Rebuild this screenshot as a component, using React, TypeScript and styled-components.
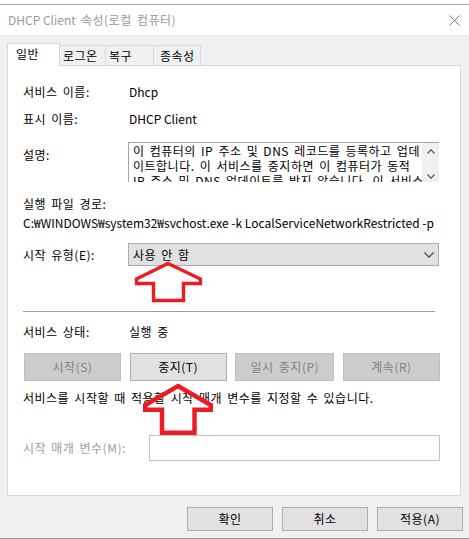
import React from "react";
import styled, { createGlobalStyle } from "styled-components";

const GlobalStyle = createGlobalStyle`
  html, body { margin: 0; padding: 0; background: #ffffff; }
  body {
    font-family: "Noto Sans CJK KR", "Noto Sans", sans-serif;
    font-size: 12px;
    color: #000;
    letter-spacing: 0.5px;
    word-spacing: 2px;
  }
  * { box-sizing: border-box; }
`;

const Window = styled.div`
  position: relative;
  width: 469px;
  height: 539px;
  background: #f0f0f0;
  display: flex;
  flex-direction: column;
  overflow: hidden;
`;

const TopStrip = styled.div`
  height: 5px;
  background: #ffffff;
  border-bottom: 1px solid #a9a9a9;
`;

const TitleBar = styled.div`
  height: 30px;
  background: #ffffff;
  display: flex;
  align-items: center;
  justify-content: space-between;
  padding: 0 9px 0 8px;
`;

const TitleText = styled.span`
  color: #999999;
  font-size: 12px;
  line-height: 16px;
`;

const Latin = styled.span`
  letter-spacing: 0;
  word-spacing: 0;
`;

const Body = styled.div`
  flex: 1;
  display: flex;
  flex-direction: column;
  padding: 8px 6px 0 7px;
`;

const TabStrip = styled.div`
  display: flex;
  align-items: flex-end;
  height: 22px;
  position: relative;
  z-index: 1;
`;

const Tab = styled.div<{ $active?: boolean; $w: number; $pad: number }>`
  width: ${(p) => p.$w}px;
  height: ${(p) => (p.$active ? 23 : 20)}px;
  margin-bottom: ${(p) => (p.$active ? -1 : 0)}px;
  margin-left: ${(p) => (p.$active ? 0 : -1)}px;
  background: ${(p) => (p.$active ? "#ffffff" : "#f0f0f0")};
  border: 1px solid #d9d9d9;
  border-bottom: none;
  padding-left: ${(p) => p.$pad}px;
  display: flex;
  align-items: ${(p) => (p.$active ? "flex-start" : "center")};
  padding-top: ${(p) => (p.$active ? 2 : 0)}px;
  font-size: 12px;
  line-height: 16px;
  white-space: nowrap;
  &:first-child { margin-left: 0; }
`;

const Panel = styled.div`
  width: 454px;
  height: 431px;
  background: #ffffff;
  border: 1px solid #d9d9d9;
  display: flex;
  flex-direction: column;
  padding-left: 15px;
`;

const Row = styled.div<{ $mt: number; $h: number; $top?: boolean }>`
  display: flex;
  align-items: ${(p) => (p.$top ? "flex-start" : "center")};
  margin-top: ${(p) => p.$mt}px;
  height: ${(p) => p.$h}px;
  flex-shrink: 0;
`;

const Label = styled.span<{ $w?: number; $mt?: number; $disabled?: boolean }>`
  width: ${(p) => p.$w ?? 105}px;
  flex-shrink: 0;
  margin-top: ${(p) => p.$mt ?? 0}px;
  line-height: 18px;
  color: ${(p) => (p.$disabled ? "#9d9d9d" : "#000")};
  white-space: nowrap;
`;

const Value = styled.span`
  padding-left: 1px;
  line-height: 18px;
  white-space: nowrap;
`;

const DescBox = styled.div`
  width: 311px;
  height: 40px;
  border-top: 1px solid #a5a5a5;
  border-left: 1px solid #a5a5a5;
  display: flex;
  overflow: hidden;
`;

const DescText = styled.div`
  flex: 1;
  padding-left: 4px;
  overflow: hidden;
`;

const DescLine = styled.div`
  height: 15px;
  line-height: 15px;
  white-space: nowrap;
`;

const ScrollBar = styled.div`
  width: 17px;
  flex-shrink: 0;
  background: #f0f0f0;
  display: flex;
  flex-direction: column;
  align-items: center;
  justify-content: space-between;
  padding: 6px 0 3px;
`;

const Select = styled.div`
  width: 311px;
  height: 23px;
  background: #e1e1e1;
  border: 1px solid #adadad;
  display: flex;
  align-items: center;
  justify-content: space-between;
  padding: 0 4px 0 4px;
`;

const Separator = styled.div<{ $mt: number }>`
  margin-top: ${(p) => p.$mt}px;
  width: 412px;
  height: 1px;
  background: #a0a0a0;
  flex-shrink: 0;
`;

const ButtonRow = styled.div<{ $mt: number }>`
  margin-top: ${(p) => p.$mt}px;
  margin-left: 1px;
  width: 416px;
  height: 28px;
  display: flex;
  justify-content: space-between;
  flex-shrink: 0;
`;

const Button = styled.div<{ $disabled?: boolean; $w: number; $h: number }>`
  width: ${(p) => p.$w}px;
  height: ${(p) => p.$h}px;
  background: ${(p) => (p.$disabled ? "#cccccc" : "#e1e1e1")};
  border: 1px solid ${(p) => (p.$disabled ? "#bfbfbf" : "#adadad")};
  color: ${(p) => (p.$disabled ? "#838383" : "#000")};
  display: flex;
  align-items: center;
  justify-content: center;
  font-size: 12px;
  line-height: 16px;
  white-space: nowrap;
`;

const TextLine = styled.div<{ $mt: number }>`
  margin-top: ${(p) => p.$mt}px;
  line-height: 18px;
  height: 18px;
  white-space: nowrap;
  flex-shrink: 0;
`;

const Input = styled.div`
  width: 291px;
  height: 26px;
  background: #ffffff;
  border: 1px solid #c3c3c3;
`;

const Footer = styled.div`
  margin-top: 11px;
  display: flex;
  justify-content: flex-end;
  gap: 9px;
`;

const BottomEdge = styled.div`
  height: 1px;
  background: #9a9a9a;
`;

const ArrowSvg = styled.svg<{ $x: number; $y: number }>`
  position: absolute;
  left: ${(p) => p.$x}px;
  top: ${(p) => p.$y}px;
  pointer-events: none;
  overflow: visible;
`;

const CloseIcon = () => (
  <svg width="11" height="11" viewBox="0 0 11 11">
    <path d="M0.5 0.5 L10.5 10.5 M10.5 0.5 L0.5 10.5" stroke="#7a7a7a" strokeWidth="1" fill="none" />
  </svg>
);

const Chevron = ({ up, w = 8, h = 5, color = "#606060" }: { up?: boolean; w?: number; h?: number; color?: string }) => (
  <svg width={w} height={h} viewBox={`0 0 ${w} ${h}`}>
    <polyline
      points={up ? `0.5,${h - 0.5} ${w / 2},0.8 ${w - 0.5},${h - 0.5}` : `0.5,0.5 ${w / 2},${h - 0.8} ${w - 0.5},0.5`}
      stroke={color}
      strokeWidth="1.3"
      fill="none"
    />
  </svg>
);

const Arrow = ({ x, y, points, sw }: { x: number; y: number; points: number[][]; sw: number }) => {
  const maxX = Math.max(...points.map((p) => p[0])) + sw;
  const maxY = Math.max(...points.map((p) => p[1])) + sw;
  return (
    <ArrowSvg $x={x} $y={y} width={maxX} height={maxY}>
      <polygon
        points={points.map((p) => p.join(",")).join(" ")}
        fill="none"
        stroke="#ed1c24"
        strokeWidth={sw}
        strokeLinejoin="miter"
      />
    </ArrowSvg>
  );
};

export default function App() {
  return (
    <>
      <GlobalStyle />
      <Window>
        <TopStrip />
        <TitleBar>
          <TitleText><Latin>DHCP Client</Latin> 속성(로컬 컴퓨터)</TitleText>
          <CloseIcon />
        </TitleBar>
        <Body>
          <TabStrip>
            <Tab $active $w={53} $pad={8}>일반</Tab>
            <Tab $w={47} $pad={3}>로그온</Tab>
            <Tab $w={49} $pad={3}>복구</Tab>
            <Tab $w={48} $pad={6}>종속성</Tab>
          </TabStrip>
          <Panel>
            <Row $mt={17} $h={18}>
              <Label>서비스 이름:</Label>
              <Value><Latin>Dhcp</Latin></Value>
            </Row>
            <Row $mt={9} $h={18}>
              <Label>표시 이름:</Label>
              <Value><Latin>DHCP Client</Latin></Value>
            </Row>
            <Row $mt={14} $h={40} $top>
              <Label $mt={4}>설명:</Label>
              <DescBox>
                <DescText>
                  <DescLine>이 컴퓨터의 IP 주소 및 DNS 레코드를 등록하고 업데</DescLine>
                  <DescLine>이트합니다. 이 서비스를 중지하면 이 컴퓨터가 동적</DescLine>
                  <DescLine>IP 주소 및 DNS 업데이트를 받지 않습니다. 이 서비스</DescLine>
                </DescText>
                <ScrollBar>
                  <Chevron up />
                  <Chevron />
                </ScrollBar>
              </DescBox>
            </Row>
            <TextLine $mt={13}>실행 파일 경로:</TextLine>
            <TextLine $mt={1}>
              <Latin>C:₩WINDOWS₩system32₩svchost.exe -k LocalServiceNetworkRestricted -p</Latin>
            </TextLine>
            <Row $mt={11} $h={23}>
              <Label>시작 유형(E):</Label>
              <Select>
                <span>사용 안 함</span>
                <Chevron w={10} h={6} color="#505050" />
              </Select>
            </Row>
            <Separator $mt={45} />
            <Row $mt={11} $h={18}>
              <Label>서비스 상태:</Label>
              <Value>실행 중</Value>
            </Row>
            <ButtonRow $mt={12}>
              <Button $disabled $w={97} $h={28}>시작(S)</Button>
              <Button $w={97} $h={28}>중지(T)</Button>
              <Button $disabled $w={99} $h={28}>일시 중지(P)</Button>
              <Button $disabled $w={97} $h={28}>계속(R)</Button>
            </ButtonRow>
            <TextLine $mt={8}>서비스를 시작할 때 적용할 시작 매개 변수를 지정할 수 있습니다.</TextLine>
            <Row $mt={28} $h={26}>
              <Label $w={126} $disabled>시작 매개 변수(M):</Label>
              <Input />
            </Row>
          </Panel>
          <Footer>
            <Button $w={86} $h={24}>확인</Button>
            <Button $w={86} $h={24}>취소</Button>
            <Button $w={86} $h={24}>적용(A)</Button>
          </Footer>
        </Body>
        <BottomEdge />
        <Arrow
          x={0}
          y={0}
          sw={3.4}
          points={[
            [168, 263.5],
            [200.5, 279],
            [200.5, 283.5],
            [183.5, 283.5],
            [183.5, 300.5],
            [153.5, 300.5],
            [153.5, 283.5],
            [136.5, 283.5],
            [136.5, 279],
          ]}
        />
        <Arrow
          x={0}
          y={0}
          sw={4.5}
          points={[
            [178, 386],
            [210.75, 405],
            [210.75, 409.75],
            [194.5, 409.75],
            [194.5, 432.75],
            [162, 432.75],
            [162, 409.75],
            [145.25, 409.75],
            [145.25, 405],
          ]}
        />
      </Window>
    </>
  );
}
